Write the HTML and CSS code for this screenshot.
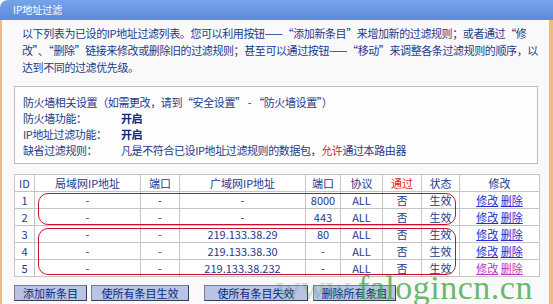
FILE: index.html
```html
<!DOCTYPE html>
<html>
<head>
    <title>IP地址过滤</title>
    <link rel="stylesheet" href="styles.css">
</head>
<body>
    <div class="panel">
        <div class="title">IP地址过滤</div>
        <div class="content">
            <p class="intro">以下列表为已设的IP地址过滤列表。您可以利用按钮——“添加新条目”来增加新的过滤规则；或者通过“修<br>改”、“删除”链接来修改或删除旧的过滤规则；甚至可以通过按钮——“移动”来调整各条过滤规则的顺序，以<br>达到不同的过滤优先级。</p>

            <div class="info">
                <div>防火墙相关设置（如需更改，请到“安全设置” - “防火墙设置”）</div>
                <div class="info-row"><span class="info-label">防火墙功能：</span><b>开启</b></div>
                <div class="info-row"><span class="info-label">IP地址过滤功能：</span><b>开启</b></div>
                <div class="info-row"><span class="info-label">缺省过滤规则：</span>凡是不符合已设IP地址过滤规则的数据包，<span class="red">允许</span>通过本路由器</div>
            </div>

            <div class="table-wrap">
                <table class="rules">
                    <tr>
                        <th class="c-id">ID</th>
                        <th class="c-lan">局域网IP地址</th>
                        <th class="c-port">端口</th>
                        <th class="c-wan">广域网IP地址</th>
                        <th class="c-wport">端口</th>
                        <th class="c-proto">协议</th>
                        <th class="c-pass red">通过</th>
                        <th class="c-state">状态</th>
                        <th class="c-edit">修改</th>
                    </tr>
                    <tr><td>1</td><td>-</td><td>-</td><td>-</td><td>8000</td><td>ALL</td><td>否</td><td>生效</td><td><a href="#">修改</a> <a href="#">删除</a></td></tr>
                    <tr><td>2</td><td>-</td><td>-</td><td>-</td><td>443</td><td>ALL</td><td>否</td><td>生效</td><td><a href="#">修改</a> <a href="#">删除</a></td></tr>
                    <tr><td>3</td><td>-</td><td>-</td><td>219.133.38.29</td><td>80</td><td>ALL</td><td>否</td><td>生效</td><td><a href="#">修改</a> <a href="#">删除</a></td></tr>
                    <tr><td>4</td><td>-</td><td>-</td><td>219.133.38.30</td><td>-</td><td>ALL</td><td>否</td><td>生效</td><td><a href="#">修改</a> <a href="#">删除</a></td></tr>
                    <tr><td>5</td><td>-</td><td>-</td><td>219.133.38.232</td><td>-</td><td>ALL</td><td>否</td><td>生效</td><td><a href="#" class="visited">修改</a> <a href="#" class="visited">删除</a></td></tr>
                </table>
                <div class="mark mark-a"></div>
                <div class="mark mark-b"></div>
            </div>

            <div class="buttons">
                <button class="btn btn-add">添加新条目</button>
                <button class="btn btn-on">使所有条目生效</button>
                <button class="btn btn-off">使所有条目失效</button>
                <button class="btn btn-del">删除所有条目</button>
            </div>
        </div>
        <div class="watermark"><span class="faint">www.</span>falogincn.cn</div>
    </div>
</body>
</html>
```

FILE: styles.css
```css
body { margin: 0; background: #ffffff; font-family: "Noto Sans CJK SC", "DejaVu Sans", sans-serif; font-size: 11px; letter-spacing: -0.4px; color: #1d3a8a; }
.panel { position: relative; width: 553px; height: 304px; overflow: hidden; }
.title { height: 20px; line-height: 20px; padding-left: 13px; color: #ffffff; font-size: 10px; letter-spacing: 0; background: linear-gradient(#78a3ea, #5a8bda); border-top-left-radius: 8px; }
.content { height: 284px; background: #f9f9fa; border-left: 2px solid #f3b97a; border-right: 4px solid #f3b97a; padding: 0 8px 0 12px; }
.intro { margin: 0; padding: 5px 0 0 8px; line-height: 17px; white-space: nowrap; }
.info { margin-top: 10px; width: 524px; height: 78px; box-sizing: border-box; border: 1px solid #bdbdbd; background: #fdfdfd; padding: 7px 0 0 8px; line-height: 16px; }
.info-row { display: flex; }
.info-label { width: 98px; }
.info b { color: #0b2a7a; }
.red { color: #e02020; }
.table-wrap { position: relative; margin-top: 10px; width: 526px; }
.rules { width: 526px; border-collapse: collapse; background: #ffffff; }
.rules th, .rules td { border: 1px solid #c4c4c4; height: 16px; padding: 0; text-align: center; font-weight: normal; font-size: 11px; letter-spacing: 0; line-height: 15px; color: #1d3a8a; }
.rules th.red { color: #e02020; }
.c-id { width: 19px; }
.c-lan { width: 105px; }
.c-port { width: 38px; }
.c-wan { width: 125px; }
.c-wport { width: 34px; }
.c-proto { width: 41px; }
.c-pass { width: 38px; }
.c-state { width: 37px; }
.rules a { color: #2a2ad0; text-decoration: underline; }
.rules a.visited { color: #c030c0; }
.mark { position: absolute; left: 24px; width: 418px; border: 1.5px solid #c8102e; border-radius: 10px; box-sizing: border-box; }
.mark-a { top: 19px; height: 32px; }
.mark-b { top: 54px; height: 47px; }
.buttons { display: flex; margin-top: 8px; }
.btn { height: 16px; padding: 0; font-family: inherit; font-size: 11px; letter-spacing: 0; line-height: 14px; color: #0b2a7a; background: #b9c3e6; border: 1px solid #7a7a9a; border-right-color: #3a3a5a; border-bottom-color: #3a3a5a; }
.btn-add { width: 73px; }
.btn-on { width: 98px; margin-left: 4px; }
.btn-off { width: 104px; margin-left: 15px; }
.btn-del { width: 83px; margin-left: 5px; }
.watermark { position: absolute; left: 276px; top: 271px; font-family: "Liberation Serif", "DejaVu Serif", serif; font-size: 34px; line-height: 34px; letter-spacing: 0.5px; color: rgba(70, 165, 70, 0.8); pointer-events: none; }
.faint { color: rgba(70, 165, 70, 0.3); }
```
